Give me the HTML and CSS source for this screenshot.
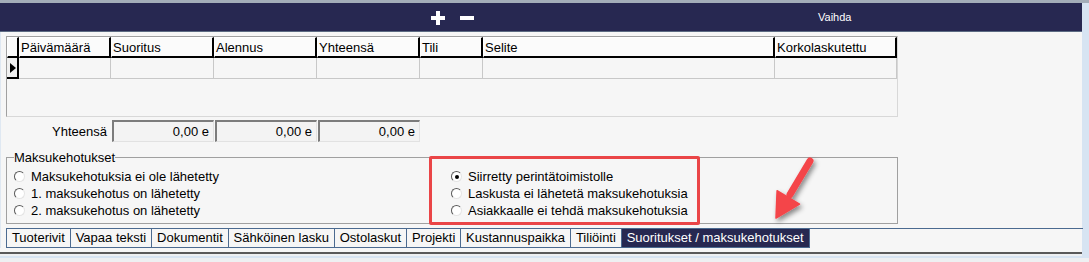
FILE: index.html
```html
<!DOCTYPE html>
<html>
<head>
<meta charset="utf-8">
<link rel="stylesheet" href="styles.css">
</head>
<body>
<div class="frame">
  <div class="window">
    <div class="topbar">
      <div class="tools">
        <span class="tool">
          <svg width="14" height="14" viewBox="0 0 14 14"><rect x="5" y="0" width="4" height="14" fill="#fff"/><rect x="0" y="5" width="14" height="4" fill="#fff"/></svg>
        </span>
        <span class="tool">
          <svg width="14" height="14" viewBox="0 0 14 14"><rect x="0" y="5" width="14" height="4" fill="#fff"/></svg>
        </span>
      </div>
      <div class="vaihda">Vaihda</div>
    </div>
    <div class="content">
      <div class="grid">
        <div class="row head">
          <div class="cell rh"></div>
          <div class="cell c1">Päivämäärä</div>
          <div class="cell c2">Suoritus</div>
          <div class="cell c3">Alennus</div>
          <div class="cell c4">Yhteensä</div>
          <div class="cell c5">Tili</div>
          <div class="cell c6">Selite</div>
          <div class="cell c7">Korkolaskutettu</div>
        </div>
        <div class="row data">
          <div class="cell rh"><svg width="6" height="10" viewBox="0 0 6 10"><path d="M0 0 L6 5 L0 10 Z" fill="#000"/></svg></div>
          <div class="cell c1"></div>
          <div class="cell c2"></div>
          <div class="cell c3"></div>
          <div class="cell c4"></div>
          <div class="cell c5"></div>
          <div class="cell c6"></div>
          <div class="cell c7"></div>
        </div>
      </div>
      <div class="totals">
        <div class="tlabel">Yhteensä</div>
        <div class="tbox">0,00 e</div>
        <div class="tbox">0,00 e</div>
        <div class="tbox">0,00 e</div>
      </div>
      <div class="remind-wrap">
        <fieldset class="remind">
          <legend>Maksukehotukset</legend>
          <div class="cols">
            <div class="col">
              <label class="radio"><span class="dot"></span>Maksukehotuksia ei ole lähetetty</label>
              <label class="radio"><span class="dot"></span>1. maksukehotus on lähetetty</label>
              <label class="radio"><span class="dot"></span>2. maksukehotus on lähetetty</label>
            </div>
            <div class="col col2">
              <label class="radio"><span class="dot on"></span>Siirretty perintätoimistolle</label>
              <label class="radio"><span class="dot"></span>Laskusta ei lähetetä maksukehotuksia</label>
              <label class="radio"><span class="dot"></span>Asiakkaalle ei tehdä maksukehotuksia</label>
            </div>
          </div>
        </fieldset>
        <div class="highlight"></div>
        <svg class="arrow" width="60" height="80" viewBox="0 0 60 80">
          <defs>
            <filter id="sh" x="-40%" y="-30%" width="180%" height="160%">
              <feDropShadow dx="2" dy="3" stdDeviation="2.5" flood-color="#000" flood-opacity="0.45"/>
            </filter>
          </defs>
          <g filter="url(#sh)">
            <path d="M47 10 L27 43.5" stroke="#f4454a" stroke-width="7" stroke-linecap="round" fill="none"/>
            <path d="M13 67 L14.1 39.7 L36.5 53.1 Z" fill="#f4454a" stroke="#f4454a" stroke-width="1.5" stroke-linejoin="round"/>
          </g>
        </svg>
      </div>
      <div class="tabs">
        <span class="tab">Tuoterivit</span>
        <span class="tab">Vapaa teksti</span>
        <span class="tab">Dokumentit</span>
        <span class="tab">Sähköinen lasku</span>
        <span class="tab">Ostolaskut</span>
        <span class="tab">Projekti</span>
        <span class="tab">Kustannuspaikka</span>
        <span class="tab">Tiliöinti</span>
        <span class="tab active">Suoritukset / maksukehotukset</span>
      </div>
    </div>
  </div>
  <div class="bottom"></div>
</div>
</body>
</html>
```

FILE: styles.css
```css
* { box-sizing: border-box; }
html, body { margin: 0; padding: 0; }
body {
  width: 1089px;
  height: 262px;
  overflow: hidden;
  background: #eef0f2;
  font-family: "Liberation Sans", Arial, sans-serif;
  font-size: 13px;
  color: #000;
}
.frame {
  background: #d7e4f2;
  border-top: 3px solid #a3adb8;
  padding: 0 7px 6px 0;
  height: 258px;
}
.window {
  background: #f6f6f6;
  height: 249px;
}
.topbar {
  height: 29px;
  background: #272851;
  border-bottom: 1px solid #5c6b83;
  display: flex;
  align-items: center;
}
.tools {
  display: flex;
  gap: 15px;
  margin-left: 431px;
  padding-top: 1px;
}
.tool { display: flex; }
.vaihda {
  color: #fff;
  font-size: 11px;
  margin-left: 344px;
}
.content {
  padding: 4px 0 0 5px;
  border-left: 1px solid #dfe8f2;
  display: flex;
  flex-direction: column;
}
.grid {
  width: 892px;
  height: 81px;
  border: 1px solid #d8d8d8;
  border-top-color: #a0a0a0;
  border-left-color: #a0a0a0;
  background: #f6f6f6;
}
.row { display: flex; }
.head { height: 21px; }
.head .cell {
  background: #fbfbfb;
  border-right: 2px solid #000;
  border-left: 1px solid #fff;
  border-bottom: 2px solid #000;
  border-top: 1px solid #fff;
  padding: 2px 0 0 1px;
  line-height: 15px;
  white-space: nowrap;
  overflow: hidden;
}
.data { height: 21px; }
.data .cell {
  border-right: 1px solid #c8c8c8;
  border-bottom: 1px solid #c8c8c8;
}
.data .rh {
  background: #f0f0f0;
  border-right: 2px solid #000;
  border-bottom: 2px solid #000;
  display: flex;
  align-items: center;
  padding-left: 3px;
}
.rh { width: 12px; }
.c1 { width: 92px; }
.c2 { width: 103px; }
.c3 { width: 103px; }
.c4 { width: 103px; }
.c5 { width: 63px; }
.c6 { width: 292px; }
.c7 { width: 122px; }
.totals {
  display: flex;
  align-items: center;
  height: 22px;
  margin-top: 3px;
  gap: 1px;
}
.tlabel {
  width: 101px;
  margin-right: 4px;
  text-align: right;
}
.tbox {
  width: 102px;
  height: 22px;
  background: #f3f3f3;
  border: 1px solid #e2e2e2;
  border-top: 2px solid #7c7c7c;
  border-left: 2px solid #7c7c7c;
  text-align: right;
  padding: 2px 4px 0 0;
  line-height: 15px;
}
.remind-wrap {
  position: relative;
  margin-top: 8px;
  width: 892px;
  height: 74px;
}
.remind {
  margin: 0;
  width: 892px;
  height: 74px;
  border: 1px solid #a0a0a0;
  padding: 3px 0 0 6px;
}
.remind legend {
  padding: 0;
  margin-left: 1px;
  line-height: 15px;
}
.cols { display: flex; }
.col { display: flex; flex-direction: column; width: 437px; }
.radio {
  display: flex;
  align-items: center;
  height: 17px;
  white-space: nowrap;
}
.dot {
  width: 11px;
  height: 11px;
  border-radius: 50%;
  border: 1px solid #5a5a5a;
  border-right-color: #e4e4e4;
  border-bottom-color: #e4e4e4;
  background: #fff;
  margin-right: 6px;
  margin-left: 1px;
  position: relative;
}
.dot.on::after {
  content: "";
  position: absolute;
  left: 2.5px;
  top: 2.5px;
  width: 4px;
  height: 4px;
  border-radius: 50%;
  background: #000;
}
.highlight {
  position: absolute;
  left: 423px;
  top: 6px;
  width: 271px;
  height: 69px;
  border: 3px solid #ea4547;
  border-radius: 2px;
}
.arrow {
  position: absolute;
  left: 757px;
  top: 1px;
}
.tabs {
  margin-top: 4px;
  width: 1077px;
  border-top: 1px solid #4b6a90;
  display: flex;
  height: 20px;
}
.tab {
  border: 1px solid #4b6a90;
  border-top: none;
  border-left: none;
  padding: 1px 4.9px 0 4.9px;
  height: 19px;
  line-height: 16px;
  white-space: nowrap;
}
.tab:first-child { border-left: 1px solid #4b6a90; }
.tab.active {
  background: #272851;
  color: #fff;
}
.bottom {
  height: 4px;
  border-top: 2px solid #5a5a5a;
  background: #eef0f2;
}
```
